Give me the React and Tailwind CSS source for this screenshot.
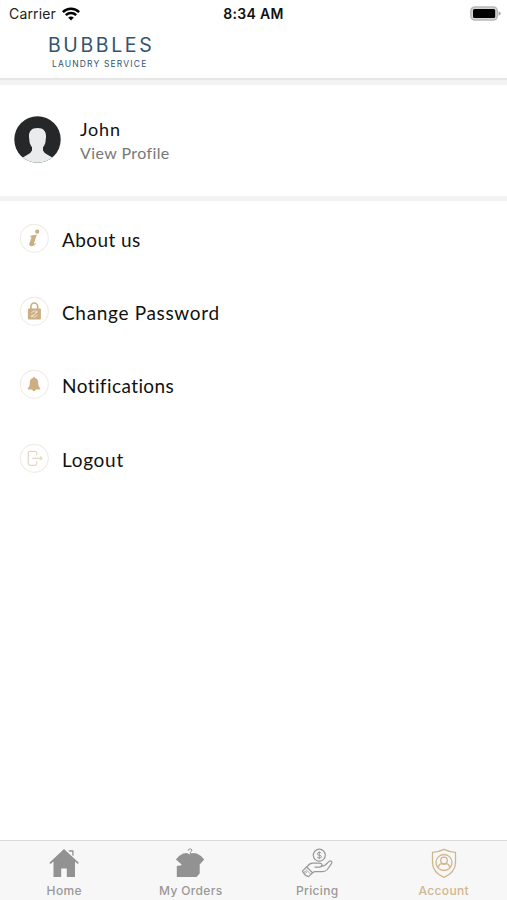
import React from "react";

const sans = "font-['Inter','Liberation_Sans',sans-serif]";

function Wifi() {
  return (
    <svg className="ml-[6px] h-[14px] w-[18px]" viewBox="0 0 18 14" fill="none" stroke="#000" strokeWidth="2.5">
      <path d="M0.9 5.1C5.4 0.7 12.6 0.7 17.1 5.1" />
      <path d="M3.8 8.2C6.8 5.4 11.2 5.4 14.2 8.2" />
      <path d="M6.2 10.6C7.8 9.2 10.2 9.2 11.8 10.6L9 13.4Z" fill="#000" stroke="none" />
    </svg>
  );
}

function Battery() {
  return (
    <svg className="h-[15px] w-[31px]" viewBox="0 0 31 15">
      <rect x="0.9" y="0.9" width="26.4" height="13.2" rx="4" fill="#d4d4d4" stroke="#b8b8b8" strokeWidth="1.5" />
      <rect x="3" y="3" width="22.2" height="9" rx="1.5" fill="#000" />
      <path d="M28.6 5.2Q30.8 6 30.8 7.5T28.6 9.8Z" fill="#a5a5a5" />
    </svg>
  );
}

function Avatar() {
  return (
    <svg className="h-[47px] w-[47px]" viewBox="0 0 47 47">
      <defs>
        <clipPath id="face">
          <circle cx="23.5" cy="23.5" r="23.2" />
        </clipPath>
      </defs>
      <g clipPath="url(#face)">
        <rect width="47" height="47" fill="#262728" />
        <path
          d="M23.5 12C17.5 12 14.6 15.4 15 21L15.6 26.6C16.1 28.5 17.1 30 18 31.2V34.5Q17.2 37 13 39L7 42.5V47H40V42.5L34 39Q29.8 37 29 34.5V31.2C30 30 31 28.5 31.4 26.6L32 21C32.4 15.4 29.5 12 23.5 12Z"
          fill="#e9eced"
        />
      </g>
    </svg>
  );
}

function Ring({ children }) {
  return (
    <svg className="h-[30px] w-[30px] shrink-0" viewBox="0 0 30 30" fill="none">
      <circle cx="15.3" cy="15.3" r="14" stroke="#f1ede5" strokeWidth="1.2" />
      {children}
    </svg>
  );
}

const gold = "#cbae82";

const rows = [
  {
    label: "About us",
    width: "tracking-[0.43px]",
    icon: (
      <>
        <circle cx="18.2" cy="8.7" r="2.1" fill={gold} />
        <path d="M10.8 13.1Q14 12.5 17.9 11.6L15 20.2Q14.7 21.9 17.4 19.3Q15.8 23.3 12.2 23.2Q9.4 22.7 10.5 20L12.5 14.4Z" fill={gold} />
      </>
    ),
  },
  {
    label: "Change Password",
    width: "tracking-[0.67px]",
    icon: (
      <>
        <path d="M11.9 14V10.4A3.4 3.4 0 0 1 18.7 10.4V14" stroke={gold} strokeWidth="1.6" />
        <rect x="8.9" y="12.4" width="13" height="11.2" rx="1" fill={gold} />
        <path d="M12.5 17.3A3.1 3.1 0 0 1 17.9 16.1M18.3 18.7A3.1 3.1 0 0 1 12.9 19.9M18.1 14.6V16.5H16.2M12.7 21.4V19.5H14.6M14.2 18L15.2 19L16.8 17.1" stroke="#f7f0e4" strokeWidth="0.8" />
      </>
    ),
  },
  {
    label: "Notifications",
    width: "tracking-[0.42px]",
    icon: (
      <path
        d="M15 7.7Q15.8 7.7 15.8 8.9Q19.2 9.7 19.2 13.5Q19.2 17.8 21.2 19.3V20.4H16.8Q16.6 22.2 15 22.2T13.2 20.4H8.8V19.3Q10.8 17.8 10.8 13.5Q10.8 9.7 14.2 8.9Q14.2 7.7 15 7.7Z"
        fill={gold}
      />
    ),
  },
  {
    label: "Logout",
    width: "tracking-[0.7px]",
    icon: (
      <path
        d="M17.8 12.3V10.1Q17.8 8.3 16 8.3H11Q9.2 8.3 9.2 10.1V20.5Q9.2 22.3 11 22.3H16Q17.8 22.3 17.8 20.5V18.3M13.2 15.3H23M21 13.2L23 15.3L21 17.4"
        stroke="#dccdb2"
        strokeWidth="1"
      />
    ),
  },
];

function HomeIcon() {
  return (
    <svg className="h-[32px] w-[32px]" viewBox="0 0 32 32" fill="#929292">
      <path d="M16 2L1.4 15.8L2.5 16.9L5.5 14.4V30H13.2V21.5H18.8V30H27V14.4L29.7 16.9L30.8 15.8Z" />
      <path d="M20.3 3.2H25.5V9.3L24.2 8V4.7H21.5Z" />
    </svg>
  );
}

function ShirtIcon() {
  return (
    <svg className="h-[32px] w-[32px]" viewBox="0 0 32 32" fill="#929292">
      <path d="M8.2 6.5L12 5.9Q15 8.8 18 5.9L21.8 6.5Q26.3 8.4 29.2 12.5L24.7 17.4V26.5L21.5 30H1.8V19L6.4 18.2V17.2L0.9 12.5Q3.7 8.4 8.2 6.5Z" />
      <path d="M13 3.9Q13.3 1.5 15.8 1.9Q18 2.8 16.3 4.5Q15 5.3 15 6.4L19 7.5" fill="none" stroke="#929292" />
    </svg>
  );
}

function PricingIcon() {
  return (
    <svg className="h-[32px] w-[32px]" viewBox="0 0 32 32" fill="none" stroke="#999" strokeWidth="1.2" strokeLinejoin="round">
      <circle cx="18.3" cy="8.2" r="6" />
      <path d="M20.3 6.3Q19.8 5.3 18.3 5.3Q16.4 5.3 16.4 6.7T18.3 8.2T20.3 9.7T18.3 11.1Q16.7 11.1 16.2 10M18.3 4.4V12.1" strokeWidth="1" />
      <path d="M6 20Q8.4 16.3 11.5 16.2H18Q21 16.2 21 18.1T18.5 20.2H13.5M20.8 19.2Q24 19.2 27 15.4Q29 13.1 30.5 14.5Q31.4 15.4 29.8 17.6L26.3 22.5Q24.6 24.7 21.5 24.7H14.2Q13 24.7 11.5 26" />
      <path d="M5.5 19.8L11.5 25.7L7.5 29.6Q3.3 28.7 1.4 24.1Z" />
      <path d="M4.7 22.2L9.3 26.8M4.3 24.3A1 1 0 1 0 4.4 24.3" strokeWidth="0.8" />
    </svg>
  );
}

function AccountIcon() {
  return (
    <svg className="h-[32px] w-[32px]" viewBox="0 0 32 32" fill="none" stroke="#cfb68d" strokeWidth="1.3" strokeLinejoin="round">
      <path d="M16 2.3Q21.5 5 27.5 5.3V15.5Q27.5 25.5 16 30.3Q4.5 25.5 4.5 15.5V5.3Q10.5 5 16 2.3Z" />
      <circle cx="16" cy="15.5" r="8" />
      <circle cx="16" cy="13.4" r="3.3" />
      <path d="M10.3 20.9Q10.7 16.9 14 16.7Q16 17.9 18 16.7Q21.3 16.9 21.7 20.9" />
    </svg>
  );
}

const tabs = [
  { label: "Home", Icon: HomeIcon },
  { label: "My Orders", Icon: ShirtIcon },
  { label: "Pricing", Icon: PricingIcon },
  { label: "Account", Icon: AccountIcon, active: true },
];

export default function App() {
  return (
    <div className="flex h-[900px] w-[507px] flex-col overflow-hidden bg-white font-['Lato','Noto_Sans',sans-serif]">
      <header className="flex h-[80px] shrink-0 flex-col border-b-2 border-[#e6e6e6] bg-white">
        <div className={`grid h-[27px] shrink-0 grid-cols-3 items-center pl-[9px] pr-[6px] ${sans}`}>
          <div className="flex items-center text-[14px] tracking-[0.15px] text-[#222]">
            Carrier
            <Wifi />
          </div>
          <div className="-ml-[3px] text-center text-[14px] font-semibold tracking-[0.3px] text-[#111]">8:34 AM</div>
          <div className="flex justify-end">
            <Battery />
          </div>
        </div>
        <div className="ml-[48px] mt-[8px] w-max font-['Inter',sans-serif] text-[#34546e]">
          <div className="text-[19.5px] leading-[20px] tracking-[2.6px]">BUBBLES</div>
          <div className="ml-[4px] mt-[4px] text-[8.5px] leading-[11px] tracking-[1.15px]">LAUNDRY SERVICE</div>
        </div>
      </header>

      <section className="flex h-[121px] shrink-0 items-start border-b-[5px] border-t-[5px] border-[#f3f3f3] pl-[14px] pt-[31px]">
        <Avatar />
        <div className="ml-[19px] mt-[1px]">
          <div className="text-[18px] leading-[24px] tracking-[0.8px] text-[#111]">John</div>
          <div className="text-[16px] leading-[24px] tracking-[0.4px] text-[#777]">View Profile</div>
        </div>
      </section>

      <nav className="grow">
        {rows.map((row) => (
          <div key={row.label} className="flex h-[73.4px] items-center pl-[19px]">
            <Ring>{row.icon}</Ring>
            <span className={`ml-[13px] mt-[4px] text-[19px] leading-[24px] text-[#111] ${row.width}`}>{row.label}</span>
          </div>
        ))}
      </nav>

      <footer className={`grid h-[60px] shrink-0 grid-cols-4 border-t border-[#d9d9d9] bg-[#f7f7f7] pl-[1px] ${sans}`}>
        {tabs.map(({ label, Icon, active }) => (
          <div
            key={label}
            className={`flex flex-col items-center pt-[6px] text-[12px] font-medium leading-[16px] tracking-[0.35px] ${
              active ? "text-[#cfb68d]" : "text-[#999]"
            }`}
          >
            <Icon />
            <span className="mt-[4px]">{label}</span>
          </div>
        ))}
      </footer>
    </div>
  );
}
